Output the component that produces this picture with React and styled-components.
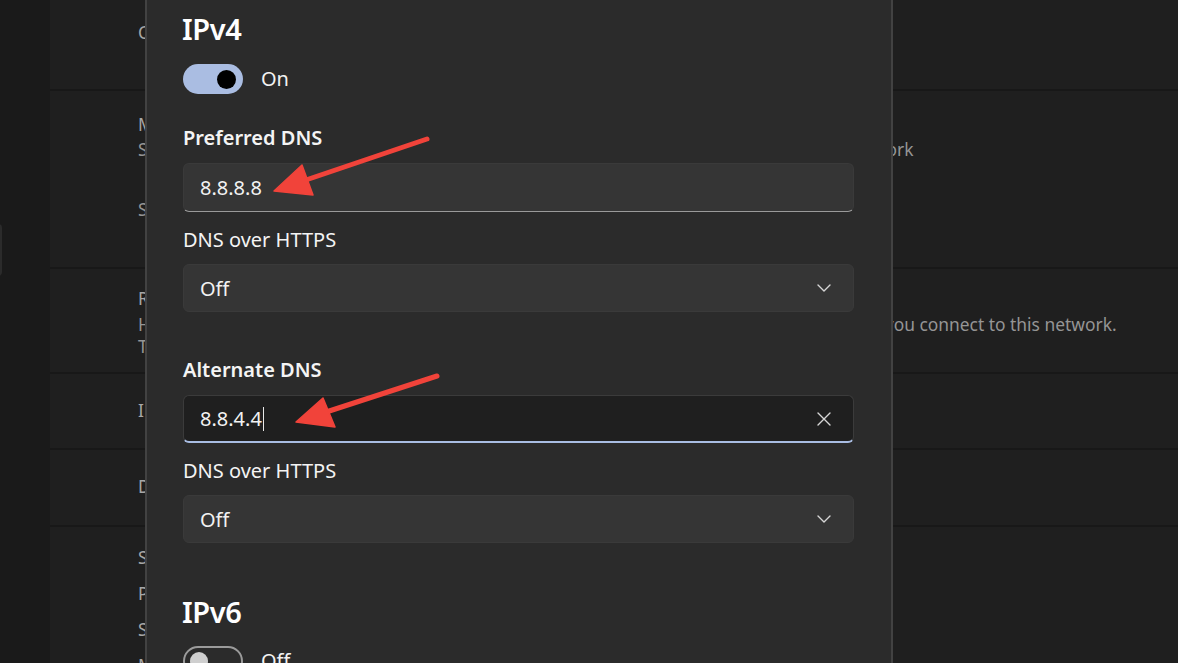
import React from "react";
import styled, { createGlobalStyle } from "styled-components";

const Global = createGlobalStyle`
  html, body { margin: 0; padding: 0; background: #1f1f1f; }
  body { font-family: "Noto Sans", "Open Sans", sans-serif; }
  * { box-sizing: border-box; }
`;

const Page = styled.div`
  position: relative;
  width: 1178px;
  height: 663px;
  overflow: hidden;
  display: flex;
  background: #1f1f1f;
`;

const Sidebar = styled.div`
  width: 50px;
  flex: none;
  background: #1a1a1a;
  display: flex;
  flex-direction: column;
  padding-top: 224px;
`;

const NavSelected = styled.div`
  width: 4px;
  height: 52px;
  margin-left: -2px;
  border-radius: 0 5px 5px 0;
  background: #2b2b2b;
`;

const Content = styled.div`
  flex: 1;
  display: flex;
  flex-direction: column;
  gap: 2px;
  background: #181818;
`;

const Row = styled.div`
  height: ${(p) => p.$h}px;
  flex: ${(p) => (p.$grow ? 1 : "none")};
  background: #1f1f1f;
  padding: ${(p) => p.$pt}px 0 0 88px;
  display: flex;
  flex-direction: column;
  gap: ${(p) => p.$gap || 0}px;
  white-space: nowrap;
`;

const BgTitle = styled.div`
  font-size: 17.4px;
  line-height: 24px;
  color: #a7a7a7;
`;

const BgDesc = styled.div`
  font-size: 17.4px;
  line-height: 24px;
  color: #959595;
  margin-top: ${(p) => p.$mt || 0}px;
`;

const Dialog = styled.div`
  position: absolute;
  left: 145px;
  top: 0;
  width: 748px;
  height: 700px;
  background: #2b2b2b;
  border-left: 2px solid #424242;
  border-right: 2px solid #424242;
  padding: 11px 37px 0 36px;
  display: flex;
  flex-direction: column;
  color: #ffffff;
`;

const Heading = styled.div`
  font-size: 29px;
  font-weight: 600;
  line-height: 36px;
  margin-left: -1px;
  margin-top: ${(p) => p.$mt || 0}px;
  letter-spacing: -0.4px;
`;

const ToggleRow = styled.div`
  display: flex;
  align-items: center;
  gap: 18px;
  margin-top: ${(p) => p.$mt ?? 16}px;
  font-size: 20px;
  line-height: 32px;
  color: #f2f2f2;
`;

const Toggle = styled.div`
  width: 60px;
  height: 30px;
  border-radius: 15px;
  display: flex;
  align-items: center;
  padding: 0 ${(p) => (p.$on ? "7px" : "5px")};
  justify-content: ${(p) => (p.$on ? "flex-end" : "flex-start")};
  background: ${(p) => (p.$on ? "#aabde2" : "transparent")};
  border: ${(p) => (p.$on ? "none" : "2px solid #9b9b9b")};
`;

const Knob = styled.div`
  width: ${(p) => (p.$on ? 19 : 18)}px;
  height: ${(p) => (p.$on ? 19 : 18)}px;
  border-radius: 50%;
  background: ${(p) => (p.$on ? "#000" : "#cfcfcf")};
`;

const Label = styled.div`
  font-size: 20px;
  line-height: 28px;
  font-weight: ${(p) => (p.$bold ? 600 : 400)};
  margin-top: ${(p) => p.$mt}px;
  color: #f4f4f4;
`;

const Field = styled.div`
  margin-top: ${(p) => p.$mt}px;
  height: ${(p) => p.$h || 48}px;
  border-radius: 6px;
  display: flex;
  align-items: center;
  justify-content: space-between;
  padding: 0 22px 0 16px;
  font-size: 20px;
  color: #f2f2f2;
  background: ${(p) => (p.$focus ? "#1f1f1f" : "#353535")};
  border: 1px solid ${(p) => (p.$focus ? "#3b3b3b" : "#3a3a3a")};
  border-bottom: ${(p) =>
    p.$focus ? "2px solid #a9bde3" : p.$input ? "1px solid #9a9a9a" : "1px solid #3a3a3a"};
`;

const Value = styled.span`
  display: flex;
  align-items: center;
`;

const Caret = styled.span`
  display: inline-block;
  width: 1.5px;
  height: 24px;
  background: #e8e8e8;
  margin-left: 1px;
`;

const Overlay = styled.svg`
  position: absolute;
  left: 0;
  top: 0;
  pointer-events: none;
`;

const Chevron = () => (
  <svg width="14" height="8" viewBox="0 0 14 8" fill="none">
    <path d="M1 1l6 6 6-6" stroke="#d6d6d6" strokeWidth="1.4" strokeLinecap="round" strokeLinejoin="round" />
  </svg>
);

const Clear = () => (
  <svg width="14" height="14" viewBox="0 0 14 14" fill="none">
    <path d="M1 1l12 12M13 1L1 13" stroke="#d6d6d6" strokeWidth="1.4" strokeLinecap="round" />
  </svg>
);

export default function App() {
  return (
    <>
      <Global />
      <Page>
        <Sidebar>
          <NavSelected />
        </Sidebar>
        <Content>
          <Row $h={89} $pt={20}>
            <BgTitle>Connect automatically when in range</BgTitle>
          </Row>
          <Row $h={176} $pt={21}>
            <BgTitle>Metered connection</BgTitle>
            <BgDesc $mt={1}>
              Some apps might work differently to reduce data usage when you're connected to this network
            </BgDesc>
            <BgDesc $mt={36}>Set a data limit to help control data usage on this network</BgDesc>
          </Row>
          <Row $h={103} $pt={17}>
            <BgTitle>Random hardware addresses</BgTitle>
            <BgDesc $mt={2}>
              Help protect your privacy by making it harder for people to track your device location when you connect to this network.
            </BgDesc>
            <BgDesc $mt={-2}>The setting takes effect the next time you connect to this network.</BgDesc>
          </Row>
          <Row $h={74} $pt={24}>
            <BgTitle>IP assignment:</BgTitle>
          </Row>
          <Row $h={75} $pt={24}>
            <BgTitle>DNS server assignment:</BgTitle>
          </Row>
          <Row $grow $pt={18} $gap={12}>
            <BgTitle>SSID:</BgTitle>
            <BgTitle>Protocol:</BgTitle>
            <BgTitle>Security type:</BgTitle>
            <BgTitle>Manufacturer:</BgTitle>
          </Row>
        </Content>

        <Dialog>
          <Heading>IPv4</Heading>
          <ToggleRow>
            <Toggle $on>
              <Knob $on />
            </Toggle>
            On
          </ToggleRow>

          <Label $bold $mt={29}>Preferred DNS</Label>
          <Field $mt={11} $h={49} $input>
            <Value>8.8.8.8</Value>
          </Field>
          <Label $mt={14}>DNS over HTTPS</Label>
          <Field $mt={10} $h={48}>
            <Value>Off</Value>
            <Chevron />
          </Field>

          <Label $bold $mt={44}>Alternate DNS</Label>
          <Field $mt={11} $h={48} $focus>
            <Value>
              8.8.4.4
              <Caret />
            </Value>
            <Clear />
          </Field>
          <Label $mt={14}>DNS over HTTPS</Label>
          <Field $mt={10} $h={48}>
            <Value>Off</Value>
            <Chevron />
          </Field>

          <Heading $mt={51}>IPv6</Heading>
          <ToggleRow $mt={15}>
            <Toggle>
              <Knob />
            </Toggle>
            Off
          </ToggleRow>
        </Dialog>

        <Overlay width="1178" height="663" viewBox="0 0 1178 663">
          <g fill="#f1433a" stroke="#f1433a" strokeLinecap="round" strokeLinejoin="round">
            <line x1="427" y1="139" x2="300" y2="182" strokeWidth="5" />
            <polygon points="274,191 302,165 313,195" strokeWidth="1.5" />
            <line x1="437" y1="376" x2="320" y2="414" strokeWidth="5" />
            <polygon points="296,422 323,398 335,427" strokeWidth="1.5" />
          </g>
        </Overlay>
      </Page>
    </>
  );
}
